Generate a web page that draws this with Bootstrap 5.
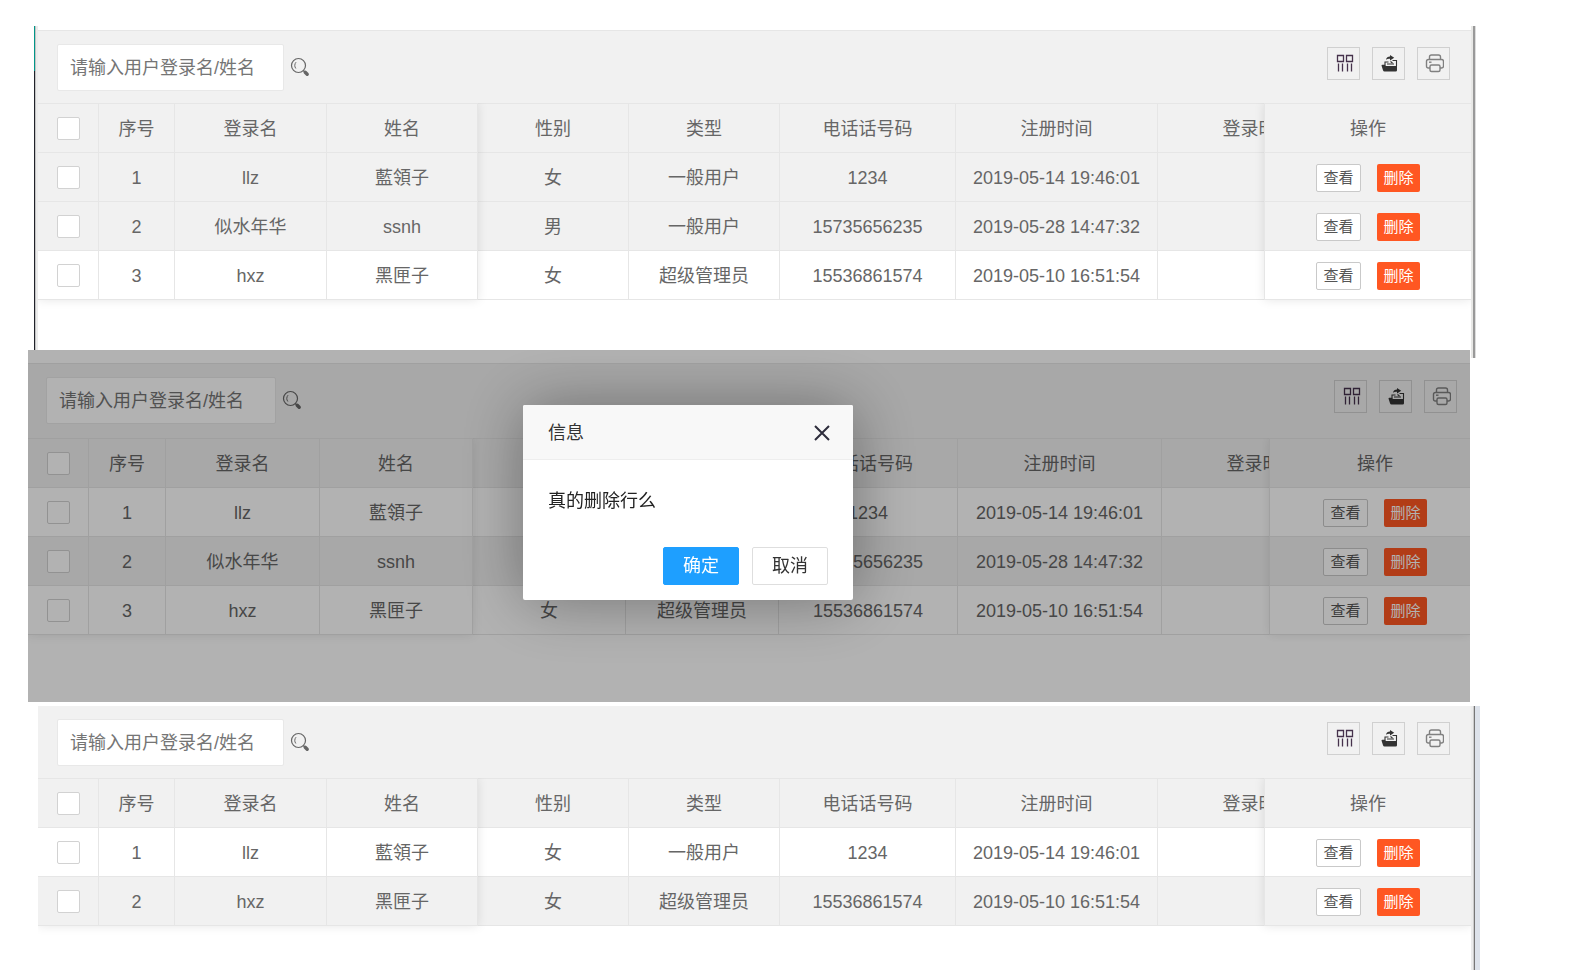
<!DOCTYPE html>
<html lang="zh-CN">
<head>
<meta charset="utf-8">
<meta name="viewport" content="width=device-width, initial-scale=1">
<title>用户管理</title>
<link rel="stylesheet" href="https://cdn.jsdelivr.net/npm/bootstrap@5.3.0/dist/css/bootstrap.min.css">
<style>
  body { font-family: "Liberation Sans", "Noto Sans CJK SC", sans-serif; font-size: 18px; line-height: 24px; color: #666; background: #fff; }

  /* panels */
  .page { padding-top: 26px; }
  .panel { display: flex; position: relative; }
  .panel-body { flex: 1 1 0; min-width: 0; background: #fff; }
  .panel-list { margin: 0 94px 0 34px; min-height: 332px; }
  .panel-confirm { margin: -8px 100px 4px 28px; min-height: 352px; overflow: hidden; z-index: 1; }
  .panel-result { margin: 0 90px 0 38px; flex: 1 0 auto; }
  .edge-start { width: 4px; background: linear-gradient(#009688, #009688) left top / 1px 45px no-repeat, linear-gradient(90deg, #20222a 1px, #c4c4c4 1px 2px, #ececec 2px); }
  .edge-end { width: 5px; background: linear-gradient(90deg, #e8e8e6 2px, #999 2px 4px, #ddd 4px); }
  .panel-result .edge-end { width: 9px; background: linear-gradient(90deg, #ececec 2px, #ccc 2px 3px, #777 3px 4px, #dde2ea 4px); }

  /* toolbar */
  .toolbar { background: #f1f1f1; padding: 13px 21px 12px 19px; }
  .toolbar.ruled { border-top: 1px solid #e6e6e6; }
  .search-box { width: 227px; height: 47px; border: 1px solid #e8e8e8; border-radius: 2px; font-size: 18px; color: #666; padding: 1px 12px 0; }
  .search-box::placeholder { color: #757575; opacity: 1; }
  .icon-btn { width: 33px; height: 33px; border: 1px solid #d0d0d0; background: none; padding: 0; color: #333; display: flex; align-items: center; justify-content: center; }
  .search-btn { border: 0; background: none; padding: 0 0 2px; margin-left: 6px; color: #666; line-height: 0; }
  .tools { gap: 12px; margin-bottom: 9px; }

  /* grid */
  .grid-wrap { position: relative; overflow: hidden; padding-bottom: 12px; --fixed-start: 440px; --fixed-end: 207px; }
  .grid-wrap::before, .grid-wrap::after { content: ""; position: absolute; top: 0; bottom: 12px; box-shadow: 0 0 10px rgba(0,0,0,.1); pointer-events: none; z-index: 3; }
  .grid-wrap::before { left: 0; width: var(--fixed-start); }
  .grid-wrap::after { right: 0; width: var(--fixed-end); }
  .grid { table-layout: fixed; width: 100%; border-collapse: separate; border-spacing: 0; border-top: 1px solid #e6e6e6; text-align: center; }
  .grid th, .grid td { height: 49px; padding: 1px 0 0; font-weight: 400; border: 0 solid #e6e6e6; border-right-width: 1px; border-bottom-width: 1px; background: #fff; overflow: hidden; white-space: nowrap; vertical-align: middle; }
  .grid th, .grid .shade > td { background: #f1f1f1; }
  .grid tr > :first-child { padding: 0; }
  .grid tr > :last-child { position: sticky; right: 0; z-index: 2; border-right-width: 0; border-left-width: 1px; }
  .c-check { width: 61px; } .c-no { width: 76px; } .c-login { width: 152px; } .c-text { width: 151px; }
  .c-tel { width: 176px; } .c-time { width: 202px; } .c-last { width: 202px; } .c-act { width: 207px; }
  .grid .form-check-input { width: 23px; height: 23px; margin: 0; border: 1px solid #d2d2d2; border-radius: 2px; background-color: #fff; vertical-align: middle; }
  .acts { gap: 16px; padding-top: 1px; }
  .row-btn { width: 45px; height: 28px; border-radius: 2px; font-size: 15px; line-height: 26px; padding: 0; border: 1px solid #c9c9c9; background: #fff; color: #555; }
  .row-btn.del { width: 43px; border: 0; background: #ff5722; color: #fff; }

  .panel-confirm .toolbar { margin-top: 13px; padding: 13px 13px 14px 18px; }
  .panel-confirm .search-box { width: 230px; }
  .panel-confirm .grid-wrap { --fixed-start: 445px; --fixed-end: 201px; }
  .panel-confirm .c-no { width: 77px; } .panel-confirm .c-login { width: 154px; } .panel-confirm .c-text { width: 153px; }
  .panel-confirm .c-tel { width: 179px; } .panel-confirm .c-time { width: 204px; } .panel-confirm .c-act { width: 201px; }
  .panel-confirm .grid tr > :last-child { padding-left: 10px; }

  /* confirm dialog */
  .mask { position: absolute; inset: 0; background: rgba(0,0,0,.3); z-index: 4; }
  .confirm { position: absolute; left: 495px; top: 55px; width: 330px; z-index: 5; color: #333; background: #fff; border: 0; border-radius: 2px; box-shadow: 1px 1px 64px rgba(0,0,0,.36); }
  .confirm .modal-header { height: 55px; padding: 2px 22px 0 25px; background: #f8f8f8; border-bottom: 1px solid #eee; border-radius: 2px 2px 0 0; }
  .confirm .modal-title { font-size: 18px; line-height: 24px; }
  .confirm .modal-body { padding: 29px 25px 34px; color: #222; }
  .confirm .modal-footer { padding: 0 25px 15px; gap: 13px; border: 0; }
  .confirm .modal-footer > .btn { width: 76px; height: 38px; margin: 0; padding: 0; border-radius: 2px; font-size: 18px; line-height: 36px; }
  .btn-ok { background: #1e9fff; color: #fff; border-color: #1e9fff; }
  .btn-no { background: #fff; color: #333; border-color: #dedede; }
  .close-btn { border: 0; background: none; padding: 0; line-height: 0; color: #2e2d3c; }
</style>
</head>
<body>
<svg class="d-none" aria-hidden="true">
  <symbol id="i-search" viewBox="0 0 20 20"><circle cx="8.500" cy="8.500" r="7" fill="none" stroke="currentColor" stroke-width="1.200"/><path d="M5.800 11.500C4.300 9.500 4.500 7 6 5.200" fill="none" stroke="currentColor" stroke-width="1"/><path d="M13.300 13.500l1.500 1.500" stroke="currentColor" stroke-width="1.200"/><path d="M15.200 15.200l2 2" stroke="currentColor" stroke-width="3.400" stroke-linecap="round"/></symbol>
  <symbol id="i-cols" viewBox="0 0 20 20"><path d="M3.500 2.500h6v6h-6zM12.500 2.500h6v6h-6zM4.500 10.500v8M8.500 10.500v8M13.500 10.500v8M17.500 10.500v8" fill="none" stroke="#46324c" stroke-width="1.300"/></symbol>
  <symbol id="i-export" viewBox="0 0 20 20"><path d="M6 12V9h3.500M13.500 7.500h4V13" fill="none" stroke="currentColor" stroke-width="1.100"/><path d="M2.500 12.500q0-.8.900-.8h2.800l.8 1.200H18v4.300q0 1.300-1.300 1.300H5.600q-1.300 0-1.600-1.300z" fill="currentColor"/><path d="M7 6.800C7.400 4.500 9 3.500 11 3.500V2l4.200 2.700-4.200 2.700V5.800C9.500 5.500 8.200 5.900 7 6.800z" fill="currentColor"/><path d="M8 11h7M11.500 8.500l2 1.500" stroke="currentColor" stroke-width="1.100"/></symbol>
  <symbol id="i-print" viewBox="0 0 20 20"><g fill="none" stroke="#808080" stroke-width="1.400"><path d="M5.500 6.500V4q0-2 2-2h7q2 0 2 2v2.500M6 15H4.500q-2 0-2-2V8.500q0-2 2-2h13q2 0 2 2V13q0 2-2 2h-1.500"/><rect x="6" y="12" width="10" height="6.500" rx="1.500"/><path d="M5 9.200h2.500"/></g></symbol>
  <symbol id="i-close" viewBox="0 0 18 18"><path d="M2 2l14 14M16 2L2 16" stroke="currentColor" stroke-width="2"/></symbol>
</svg>

<main class="page d-flex flex-column min-vh-100">

  <section class="panel panel-list" aria-label="用户列表">
    <div class="edge-start"></div>
    <div class="panel-body pt-1">
      <div class="toolbar ruled d-flex align-items-center justify-content-between">
        <form class="d-flex align-items-center" onsubmit="return false">
          <input class="search-box" type="text" aria-label="用户登录名/姓名" placeholder="请输入用户登录名/姓名">
          <button class="search-btn" type="button" aria-label="搜索"><svg width="20" height="20"><use href="#i-search"/></svg></button>
        </form>
        <div class="tools d-flex">
          <button class="icon-btn" type="button" aria-label="筛选列"><svg width="20" height="20"><use href="#i-cols"/></svg></button>
          <button class="icon-btn" type="button" aria-label="导出"><svg width="20" height="20"><use href="#i-export"/></svg></button>
          <button class="icon-btn" type="button" aria-label="打印"><svg width="20" height="20"><use href="#i-print"/></svg></button>
        </div>
      </div>
      <div class="grid-wrap">
        <table class="grid">
          <colgroup><col class="c-check"><col class="c-no"><col class="c-login"><col class="c-text"><col class="c-text"><col class="c-text"><col class="c-tel"><col class="c-time"><col class="c-last"><col class="c-act"></colgroup>
          <thead>
            <tr><th><input class="form-check-input" type="checkbox" aria-label="全选"></th><th>序号</th><th>登录名</th><th>姓名</th><th>性别</th><th>类型</th><th>电话话号码</th><th>注册时间</th><th>登录时间</th><th>操作</th></tr>
          </thead>
          <tbody>
            <tr class="shade"><td><input class="form-check-input" type="checkbox" aria-label="选择 1"></td><td>1</td><td>llz</td><td>藍領子</td><td>女</td><td>一般用户</td><td>1234</td><td>2019-05-14 19:46:01</td><td></td><td><div class="acts d-flex justify-content-center"><button class="row-btn" type="button">查看</button><button class="row-btn del" type="button">删除</button></div></td></tr>
            <tr class="shade"><td><input class="form-check-input" type="checkbox" aria-label="选择 2"></td><td>2</td><td>似水年华</td><td>ssnh</td><td>男</td><td>一般用户</td><td>15735656235</td><td>2019-05-28 14:47:32</td><td></td><td><div class="acts d-flex justify-content-center"><button class="row-btn" type="button">查看</button><button class="row-btn del" type="button">删除</button></div></td></tr>
            <tr><td><input class="form-check-input" type="checkbox" aria-label="选择 3"></td><td>3</td><td>hxz</td><td>黑匣子</td><td>女</td><td>超级管理员</td><td>15536861574</td><td>2019-05-10 16:51:54</td><td></td><td><div class="acts d-flex justify-content-center"><button class="row-btn" type="button">查看</button><button class="row-btn del" type="button">删除</button></div></td></tr>
          </tbody>
        </table>
      </div>
    </div>
    <div class="edge-end"></div>
  </section>

  <section class="panel panel-confirm" aria-label="删除确认">
    <div class="panel-body">
      <div class="toolbar ruled d-flex align-items-center justify-content-between">
        <form class="d-flex align-items-center" onsubmit="return false">
          <input class="search-box" type="text" aria-label="用户登录名/姓名" placeholder="请输入用户登录名/姓名">
          <button class="search-btn" type="button" aria-label="搜索"><svg width="20" height="20"><use href="#i-search"/></svg></button>
        </form>
        <div class="tools d-flex">
          <button class="icon-btn" type="button" aria-label="筛选列"><svg width="20" height="20"><use href="#i-cols"/></svg></button>
          <button class="icon-btn" type="button" aria-label="导出"><svg width="20" height="20"><use href="#i-export"/></svg></button>
          <button class="icon-btn" type="button" aria-label="打印"><svg width="20" height="20"><use href="#i-print"/></svg></button>
        </div>
      </div>
      <div class="grid-wrap">
        <table class="grid">
          <colgroup><col class="c-check"><col class="c-no"><col class="c-login"><col class="c-text"><col class="c-text"><col class="c-text"><col class="c-tel"><col class="c-time"><col class="c-last"><col class="c-act"></colgroup>
          <thead>
            <tr><th><input class="form-check-input" type="checkbox" aria-label="全选"></th><th>序号</th><th>登录名</th><th>姓名</th><th>性别</th><th>类型</th><th>电话话号码</th><th>注册时间</th><th>登录时间</th><th>操作</th></tr>
          </thead>
          <tbody>
            <tr><td><input class="form-check-input" type="checkbox" aria-label="选择 1"></td><td>1</td><td>llz</td><td>藍領子</td><td>女</td><td>一般用户</td><td>1234</td><td>2019-05-14 19:46:01</td><td></td><td><div class="acts d-flex justify-content-center"><button class="row-btn" type="button">查看</button><button class="row-btn del" type="button">删除</button></div></td></tr>
            <tr class="shade"><td><input class="form-check-input" type="checkbox" aria-label="选择 2"></td><td>2</td><td>似水年华</td><td>ssnh</td><td>男</td><td>一般用户</td><td>15735656235</td><td>2019-05-28 14:47:32</td><td></td><td><div class="acts d-flex justify-content-center"><button class="row-btn" type="button">查看</button><button class="row-btn del" type="button">删除</button></div></td></tr>
            <tr><td><input class="form-check-input" type="checkbox" aria-label="选择 3"></td><td>3</td><td>hxz</td><td>黑匣子</td><td>女</td><td>超级管理员</td><td>15536861574</td><td>2019-05-10 16:51:54</td><td></td><td><div class="acts d-flex justify-content-center"><button class="row-btn" type="button">查看</button><button class="row-btn del" type="button">删除</button></div></td></tr>
          </tbody>
        </table>
      </div>
    </div>
    <div class="mask"></div>
    <div class="confirm modal-content" role="dialog" aria-labelledby="confirm-title">
      <div class="modal-header">
        <h2 class="modal-title fw-normal" id="confirm-title">信息</h2>
        <button class="close-btn" type="button" aria-label="关闭"><svg width="18" height="18"><use href="#i-close"/></svg></button>
      </div>
      <div class="modal-body">真的删除行么</div>
      <div class="modal-footer">
        <button class="btn btn-ok" type="button">确定</button>
        <button class="btn btn-no" type="button">取消</button>
      </div>
    </div>
  </section>

  <section class="panel panel-result" aria-label="删除后的列表">
    <div class="panel-body">
      <div class="toolbar d-flex align-items-center justify-content-between">
        <form class="d-flex align-items-center" onsubmit="return false">
          <input class="search-box" type="text" aria-label="用户登录名/姓名" placeholder="请输入用户登录名/姓名">
          <button class="search-btn" type="button" aria-label="搜索"><svg width="20" height="20"><use href="#i-search"/></svg></button>
        </form>
        <div class="tools d-flex">
          <button class="icon-btn" type="button" aria-label="筛选列"><svg width="20" height="20"><use href="#i-cols"/></svg></button>
          <button class="icon-btn" type="button" aria-label="导出"><svg width="20" height="20"><use href="#i-export"/></svg></button>
          <button class="icon-btn" type="button" aria-label="打印"><svg width="20" height="20"><use href="#i-print"/></svg></button>
        </div>
      </div>
      <div class="grid-wrap">
        <table class="grid">
          <colgroup><col class="c-check"><col class="c-no"><col class="c-login"><col class="c-text"><col class="c-text"><col class="c-text"><col class="c-tel"><col class="c-time"><col class="c-last"><col class="c-act"></colgroup>
          <thead>
            <tr><th><input class="form-check-input" type="checkbox" aria-label="全选"></th><th>序号</th><th>登录名</th><th>姓名</th><th>性别</th><th>类型</th><th>电话话号码</th><th>注册时间</th><th>登录时间</th><th>操作</th></tr>
          </thead>
          <tbody>
            <tr><td><input class="form-check-input" type="checkbox" aria-label="选择 1"></td><td>1</td><td>llz</td><td>藍領子</td><td>女</td><td>一般用户</td><td>1234</td><td>2019-05-14 19:46:01</td><td></td><td><div class="acts d-flex justify-content-center"><button class="row-btn" type="button">查看</button><button class="row-btn del" type="button">删除</button></div></td></tr>
            <tr class="shade"><td><input class="form-check-input" type="checkbox" aria-label="选择 2"></td><td>2</td><td>hxz</td><td>黑匣子</td><td>女</td><td>超级管理员</td><td>15536861574</td><td>2019-05-10 16:51:54</td><td></td><td><div class="acts d-flex justify-content-center"><button class="row-btn" type="button">查看</button><button class="row-btn del" type="button">删除</button></div></td></tr>
          </tbody>
        </table>
      </div>
    </div>
    <div class="edge-end"></div>
  </section>
</main>
<script src="https://cdn.jsdelivr.net/npm/bootstrap@5.3.0/dist/js/bootstrap.bundle.min.js"></script>
</body>
</html>
